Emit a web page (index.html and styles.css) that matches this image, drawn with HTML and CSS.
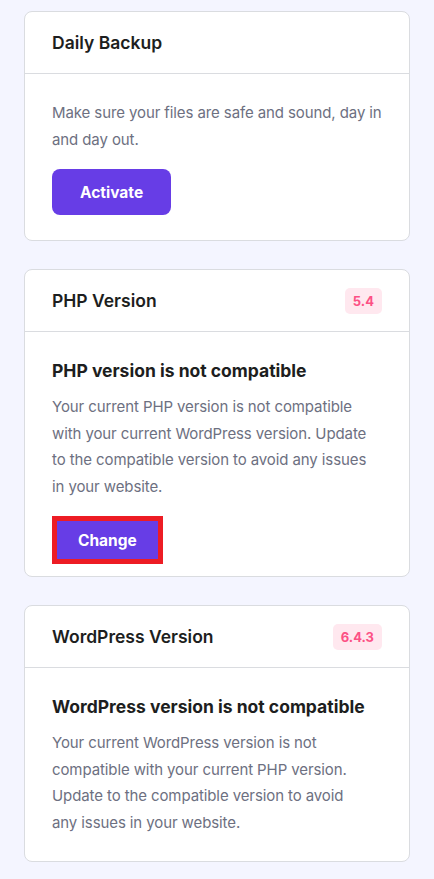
FILE: index.html
```html
<!DOCTYPE html>
<html lang="en">
<head>
    <meta charset="UTF-8">
    <meta name="viewport" content="width=device-width, initial-scale=1.0">
    <title>Website Settings</title>
    <link rel="stylesheet" href="styles.css">
</head>
<body>
    <div class="page">
        <div class="card">
            <div class="card-header">
                <h2>Daily Backup</h2>
            </div>
            <div class="card-body">
                <p>Make sure your files are safe and sound, day in and day out.</p>
                <button type="button" class="btn">Activate</button>
            </div>
        </div>

        <div class="card">
            <div class="card-header">
                <h2>PHP Version</h2>
                <span class="badge">5.4</span>
            </div>
            <div class="card-body compact">
                <h3>PHP version is not compatible</h3>
                <p>Your current PHP version is not compatible with your current WordPress version. Update to the compatible version to avoid any issues in your website.</p>
                <button type="button" class="btn btn-marked">Change</button>
            </div>
        </div>

        <div class="card">
            <div class="card-header">
                <h2>WordPress Version</h2>
                <span class="badge">6.4.3</span>
            </div>
            <div class="card-body">
                <h3>WordPress version is not compatible</h3>
                <p class="narrow">Your current WordPress version is not compatible with your current PHP version. Update to the compatible version to avoid any issues in your website.</p>
            </div>
        </div>
    </div>
</body>
</html>
```

FILE: styles.css
```css
body {
    margin: 0;
    background-color: #f4f5ff;
    font-family: Inter, "Noto Sans", sans-serif;
    color: #1d1e20;
}

.page {
    display: flex;
    flex-direction: column;
    gap: 28px;
    padding: 11px 24px 18px;
}

.card {
    background-color: white;
    border: 1px solid #dadce0;
    border-radius: 8px;
}

.card-header {
    display: flex;
    justify-content: space-between;
    align-items: center;
    height: 61px;
    padding: 0 27px;
    border-bottom: 1px solid #dadce0;
}

.card-header h2 {
    margin: 0;
    font-size: 17.5px;
    font-weight: 600;
}

.badge {
    padding: 4px 8px;
    border-radius: 5px;
    background-color: #ffe8ef;
    color: #fc5185;
    font-size: 13px;
    font-weight: 700;
    line-height: 18px;
}

.card-body {
    padding: 26px 27px 25px;
}

.card-body.compact {
    padding-bottom: 12px;
}

.card-body h3 {
    margin: 0 0 10px;
    font-size: 17.5px;
    font-weight: 700;
    line-height: 26px;
}

.card-body p {
    margin: 0;
    font-size: 15px;
    letter-spacing: -0.1px;
    line-height: 26.5px;
    color: #6d7081;
}

.card-body p.narrow {
    max-width: 315px;
}

.btn {
    display: block;
    height: 46px;
    margin-top: 16px;
    padding: 0 28px;
    border: none;
    border-radius: 8px;
    background-color: #673de6;
    color: white;
    font-family: inherit;
    font-size: 15.5px;
    font-weight: 700;
    cursor: pointer;
}

/* highlighted button from the screenshot */
.btn-marked {
    height: 48px;
    padding: 0 26px;
    border-radius: 0;
    box-shadow: inset 0 0 0 5px #ed1c24;
}
```
